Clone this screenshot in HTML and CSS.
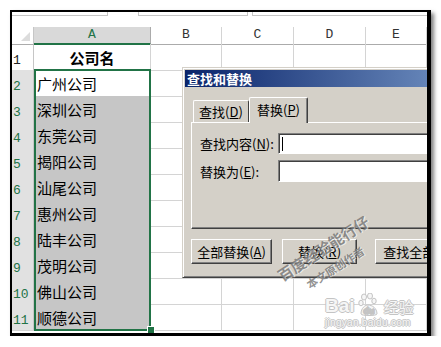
FILE: index.html
```html
<!DOCTYPE html>
<html lang="zh-CN">
<head>
    <meta charset="UTF-8">
    <title>查找和替换</title>
    <link rel="stylesheet" href="styles.css">
</head>
<body>

    <div class="frame">
        <div class="topbar">
            <div class="namebox"></div>
            <div class="fxbox"></div>
            <div class="formula"></div>
        </div>

        <div class="row head">
            <div class="corner"></div>
            <div class="ch sel">A</div>
            <div class="ch">B</div>
            <div class="ch">C</div>
            <div class="ch">D</div>
            <div class="ch">E</div>
        </div>

        <div class="row">
            <div class="rh">1</div>
            <div class="cell title">公司名</div>
            <div class="cell"></div><div class="cell"></div><div class="cell"></div><div class="cell"></div>
        </div>
        <div class="row">
            <div class="rh on">2</div>
            <div class="cell active">广州公司</div>
            <div class="cell"></div><div class="cell"></div><div class="cell"></div><div class="cell"></div>
        </div>
        <div class="row">
            <div class="rh on">3</div>
            <div class="cell picked">深圳公司</div>
            <div class="cell"></div><div class="cell"></div><div class="cell"></div><div class="cell"></div>
        </div>
        <div class="row">
            <div class="rh on">4</div>
            <div class="cell picked">东莞公司</div>
            <div class="cell"></div><div class="cell"></div><div class="cell"></div><div class="cell"></div>
        </div>
        <div class="row">
            <div class="rh on">5</div>
            <div class="cell picked">揭阳公司</div>
            <div class="cell"></div><div class="cell"></div><div class="cell"></div><div class="cell"></div>
        </div>
        <div class="row">
            <div class="rh on">6</div>
            <div class="cell picked">汕尾公司</div>
            <div class="cell"></div><div class="cell"></div><div class="cell"></div><div class="cell"></div>
        </div>
        <div class="row">
            <div class="rh on">7</div>
            <div class="cell picked">惠州公司</div>
            <div class="cell"></div><div class="cell"></div><div class="cell"></div><div class="cell"></div>
        </div>
        <div class="row">
            <div class="rh on">8</div>
            <div class="cell picked">陆丰公司</div>
            <div class="cell"></div><div class="cell"></div><div class="cell"></div><div class="cell"></div>
        </div>
        <div class="row">
            <div class="rh on">9</div>
            <div class="cell picked">茂明公司</div>
            <div class="cell"></div><div class="cell"></div><div class="cell"></div><div class="cell"></div>
        </div>
        <div class="row">
            <div class="rh on">10</div>
            <div class="cell picked">佛山公司</div>
            <div class="cell"></div><div class="cell"></div><div class="cell"></div><div class="cell"></div>
        </div>
        <div class="row">
            <div class="rh on">11</div>
            <div class="cell picked last">顺德公司</div>
            <div class="cell"></div><div class="cell"></div><div class="cell"></div><div class="cell"></div>
        </div>

        <!-- selection outline A2:A11 -->
        <div class="selection"></div>
        <div class="handle"></div>

        <div class="dialog">
            <div class="dlg-title">查找和替换</div>
            <div class="tabs">
                <div class="tab">查找(<u>D</u>)</div>
                <div class="tab active">替换(<u>P</u>)</div>
            </div>
            <div class="panel">
                <div class="field">
                    <label>查找内容(<u>N</u>):</label>
                    <div class="input"><span class="caret"></span></div>
                </div>
                <div class="field">
                    <label>替换为(<u>E</u>):</label>
                    <div class="input tall"></div>
                </div>
            </div>
            <div class="buttons">
                <div class="btn wide">全部替换(<u>A</u>)</div>
                <div class="btn mid">替换(<u>R</u>)</div>
                <div class="btn wide far">查找全部(<u>I</u>)</div>
            </div>
        </div>

        <div class="wm wm1">百度经验能行仔</div>
        <div class="wm wm2">本文原创作者</div>

        <div class="logo">
            <span class="bai">Bai</span>
            <svg class="paw" width="22" height="24" viewBox="0 0 22 24">
                <g fill="#f6f6f6" stroke="#c4c4c4" stroke-width="1">
                    <ellipse cx="6" cy="4" rx="2.5" ry="3"/>
                    <ellipse cx="12" cy="3" rx="2.5" ry="3"/>
                    <ellipse cx="3" cy="10" rx="2.2" ry="2.8"/>
                    <ellipse cx="16" cy="8" rx="2.2" ry="2.8"/>
                    <path d="M3 21 C3 15 7 12 10 12 C14 12 19 15 19 21 C19 23 3 23 3 21 Z"/>
                </g>
                <text x="11" y="21" text-anchor="middle" class="du">du</text>
            </svg>
            <span class="jy">经验</span>
            <div class="url">jingyan.baidu.com</div>
        </div>
    </div>

</body>
</html>
```

FILE: styles.css
```css
* {
    margin: 0;
    padding: 0;
    box-sizing: border-box;
}

body {
    background: #fff;
    font-family: "Noto Sans CJK SC", sans-serif;
}

.frame {
    position: relative;
    margin: 10px 0 0 10px;
    width: 421px;
    height: 326px;
    border-style: solid;
    border-color: #000;
    border-width: 2px 4px 3px 2px;
    box-shadow: 3px 3px 4px rgba(0, 0, 0, 0.5);
    overflow: hidden;
    background: #fff;
}

/* formula bar remains */
.topbar {
    display: flex;
    height: 15px;
}

.namebox {
    width: 96px;
    height: 4px;
    border-right: 1px solid #c6c6c6;
    border-bottom: 1px solid #c6c6c6;
}

.fxbox {
    width: 110px;
    height: 4px;
    margin-left: 30px;
    border: 1px solid #c6c6c6;
    border-top: none;
}

.formula {
    flex: 1;
    height: 4px;
    margin-left: 4px;
    border-left: 1px solid #c6c6c6;
    border-bottom: 1px solid #c6c6c6;
}

/* grid */
.row {
    display: grid;
    grid-template-columns: 22px 117px 71px 72px 72px 61px;
    height: 26px;
}

.row.head {
    height: 17px;
}

.corner {
    position: relative;
    border-right: 1px solid #c6c6c6;
    border-bottom: 1px solid #ababab;
}

.corner::after {
    content: "";
    position: absolute;
    right: 3px;
    bottom: 3px;
    border-style: solid;
    border-width: 0 0 9px 9px;
    border-color: transparent transparent #dcdcdc transparent;
}

.ch {
    font-family: "Liberation Mono", monospace;
    font-size: 13px;
    line-height: 16px;
    text-align: center;
    color: #333;
    border-right: 1px solid #d4d4d4;
    border-bottom: 1px solid #ababab;
}

.ch.sel {
    background: #d9d9d9;
    color: #217346;
    border-bottom: 2px solid #217346;
    border-right-color: #ababab;
}

.rh {
    font-family: "Liberation Mono", monospace;
    font-size: 13px;
    line-height: 14px;
    color: #222;
    display: flex;
    align-items: flex-end;
    padding: 0 0 2px 1px;
    border-right: 1px solid #c6c6c6;
    border-bottom: 1px solid #d4d4d4;
}

.rh.on {
    background: #e1e1e1;
    color: #217346;
}

.cell {
    font-size: 15px;
    line-height: 25px;
    padding: 1px 0 0 3px;
    color: #000;
    white-space: nowrap;
    border-right: 1px solid #d4d4d4;
    border-bottom: 1px solid #d4d4d4;
}

.cell.title {
    font-weight: bold;
    text-align: center;
    padding-left: 0;
}

.cell.active {
    border-bottom-color: #a8a8a8;
}

.cell.picked {
    background: #c6c6c6;
    border-bottom-color: #a8a8a8;
}

.selection {
    position: absolute;
    left: 22px;
    top: 57px;
    width: 117px;
    height: 262px;
    border: 2px solid #217346;
}

.handle {
    position: absolute;
    left: 136px;
    top: 315px;
    width: 6px;
    height: 6px;
    background: #217346;
    outline: 1px solid #fff;
}

/* find & replace dialog */
.dialog {
    position: absolute;
    left: 170px;
    top: 55px;
    width: 300px;
    height: 211px;
    padding: 2px;
    background: #d4d0c8;
    border: 1px solid;
    border-color: #d4d0c8 #404040 #404040 #d4d0c8;
    box-shadow: inset 1px 1px #fff, inset -1px -1px #808080;
    font-size: 13px;
    color: #000;
}

.dlg-title {
    height: 17px;
    line-height: 17px;
    padding-left: 2px;
    color: #fff;
    font-weight: bold;
    background: linear-gradient(to right, #0a246a, #a6caf0 420px);
}

.tabs {
    display: flex;
    align-items: flex-end;
    height: 25px;
    margin: 10px 0 0 8px;
    position: relative;
    z-index: 1;
}

.tab {
    width: 56px;
    height: 22px;
    line-height: 21px;
    text-align: center;
    border-top: 1px solid #fff;
    border-left: 1px solid #fff;
    border-right: 1px solid #404040;
    border-radius: 2px 2px 0 0;
}

.tab.active {
    width: 59px;
    height: 26px;
    line-height: 24px;
    margin-bottom: -1px;
    background: #d4d0c8;
    box-shadow: inset -1px 0 #808080;
}

.panel {
    height: 107px;
    margin-left: 6px;
    padding: 10px 0 0 8px;
    border-top: 1px solid #fff;
    border-left: 1px solid #fff;
    border-bottom: 1px solid #404040;
    box-shadow: inset 0 -1px #808080;
}

.field {
    display: flex;
    align-items: center;
    margin-bottom: 6px;
}

.field label {
    width: 78px;
    flex-shrink: 0;
}

.input {
    flex: 1;
    height: 21px;
    background: #fff;
    border: 1px solid;
    border-color: #808080 #fff #fff #808080;
    box-shadow: inset 1px 1px #404040;
    padding: 3px 0 0 3px;
}

.input.tall {
    height: 22px;
}

.caret {
    display: block;
    width: 1px;
    height: 14px;
    background: #000;
}

.buttons {
    display: flex;
    margin: 10px 0 0 6px;
}

.btn {
    height: 25px;
    line-height: 23px;
    text-align: center;
    white-space: nowrap;
    border: 1px solid;
    border-color: #fff #404040 #404040 #fff;
    box-shadow: inset -1px -1px #808080;
}

.btn.wide {
    width: 81px;
}

.btn.mid {
    width: 75px;
    margin-left: 10px;
}

.btn.far {
    margin-left: 18px;
}

/* watermark */
.wm {
    position: absolute;
    font-weight: bold;
    color: rgba(110, 110, 110, 0.75);
    text-shadow: 1px 1px 0 rgba(255, 255, 255, 0.6);
    white-space: nowrap;
    transform: translate(-50%, -50%) rotate(-33deg);
}

.wm1 {
    left: 311px;
    top: 236px;
    font-size: 15px;
}

.wm2 {
    left: 323px;
    top: 255px;
    font-size: 11px;
}

.logo {
    position: absolute;
    left: 313px;
    top: 281px;
    width: 90px;
    color: #f6f6f6;
    text-shadow: 1px 0 #c4c4c4, -1px 0 #c4c4c4, 0 1px #c4c4c4, 0 -1px #c4c4c4;
}

.bai {
    font-family: "Liberation Sans", sans-serif;
    font-weight: bold;
    font-size: 19px;
    vertical-align: bottom;
}

.paw {
    vertical-align: bottom;
}

.du {
    font-family: "Liberation Sans", sans-serif;
    font-size: 9px;
    font-weight: bold;
    fill: #c4c4c4;
}

.jy {
    font-size: 15px;
    vertical-align: bottom;
}

.url {
    font-family: "Liberation Sans", sans-serif;
    font-size: 10px;
    line-height: 11px;
    letter-spacing: 0.3px;
}
```
